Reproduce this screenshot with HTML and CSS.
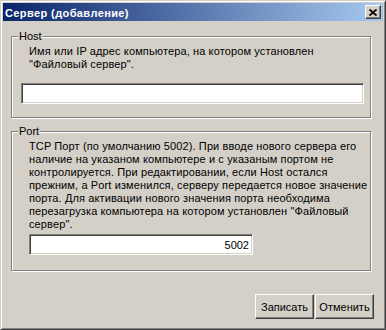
FILE: index.html
```html
<!DOCTYPE html>
<html lang="ru">
<head>
  <meta charset="UTF-8">
  <title>Сервер (добавление)</title>
  <link rel="stylesheet" href="styles.css">
</head>
<body>

<div class="window">
  <div class="caption">
    <span class="caption-text">Сервер (добавление)</span>
    <div class="close">
      <svg width="8" height="7" viewBox="0 0 8 7">
        <path d="M0.5 0.5 L7.5 6.5 M7.5 0.5 L0.5 6.5" stroke="#000" stroke-width="1.8" fill="none"/>
      </svg>
    </div>
  </div>

  <div class="client">
    <div class="group host">
      <span class="group-title">Host</span>
      <div class="hint">Имя или IP адрес компьютера, на котором установлен<br>"Файловый сервер".</div>
      <input class="edit host-edit" type="text">
    </div>

    <div class="group port">
      <span class="group-title">Port</span>
      <div class="hint">TCP Порт (по умолчанию 5002). При вводе нового сервера его<br>наличие на указаном компьютере и с указаным портом не<br>контролируется. При редактировании, если Host остался<br>прежним, а Port изменился, серверу передается новое значение<br>порта. Для активации нового значения порта необходима<br>перезагрузка компьютера на котором установлен "Файловый<br>сервер".</div>
      <input class="edit port-edit" type="text" value="5002">
    </div>

    <div class="buttons">
      <button class="btn">Записать</button>
      <button class="btn">Отменить</button>
    </div>
  </div>
</div>

</body>
</html>
```

FILE: styles.css
```css
* {
  box-sizing: border-box;
}
body {
  margin: 0;
  background: #d4d0c8;
  font-family: "Liberation Sans", Arial, sans-serif;
  font-size: 11px;
  color: #000;
}
.window {
  width: 386px;
  height: 330px;
  background: #d4d0c8;
  border: 1px solid;
  border-color: #d4d0c8 #404040 #404040 #d4d0c8;
  box-shadow: inset 1px 1px #fff, inset -1px -1px #808080;
  padding: 2px;
  display: flex;
  flex-direction: column;
}
.caption {
  height: 18px;
  display: flex;
  align-items: center;
  justify-content: space-between;
  padding: 0 2px 0 2px;
  background: linear-gradient(to right, #0a246a, #a6caf0);
}
.caption-text {
  color: #fff;
  font-weight: bold;
  font-size: 11px;
  letter-spacing: 0.4px;
  padding-top: 1px;
}
.close {
  width: 16px;
  height: 14px;
  background: #d4d0c8;
  border: 1px solid;
  border-color: #fff #404040 #404040 #fff;
  box-shadow: inset -1px -1px #808080;
  display: flex;
  align-items: center;
  justify-content: center;
}
.close svg {
  display: block;
}
.client {
  flex: 1;
  display: flex;
  flex-direction: column;
  padding-left: 8px;
}
.group {
  position: relative;
  width: 360px;
  border: 1px solid #808080;
  box-shadow: 1px 1px #fff, inset 1px 1px #fff;
  padding: 8px 0 0 0;
  display: flex;
  flex-direction: column;
  align-items: flex-start;
}
.group-title {
  position: absolute;
  top: -7px;
  left: 6px;
  padding: 0 1px;
  line-height: 13px;
  background: #d4d0c8;
}
.hint {
  line-height: 13px;
  padding-left: 17px;
  letter-spacing: 0.12px;
  white-space: nowrap;
}
.edit {
  height: 21px;
  margin: 0;
  padding: 0 3px;
  font-family: "Liberation Sans", Arial, sans-serif;
  font-size: 11px;
  color: #000;
  background: #fff;
  border: 1px solid;
  border-color: #808080 #fff #fff #808080;
  box-shadow: inset 1px 1px #404040, inset -1px -1px #d4d0c8;
  outline: none;
}
.host {
  margin-top: 15px;
  height: 82px;
}
.host-edit {
  margin: 12px 0 0 9px;
  width: 343px;
}
.port {
  margin-top: 13px;
  height: 140px;
}
.port-edit {
  margin: 3px 0 0 17px;
  width: 224px;
  text-align: right;
}
.buttons {
  display: flex;
  justify-content: flex-end;
  gap: 1px;
  margin-top: 23px;
  padding-right: 9px;
}
.btn {
  width: 59px;
  height: 25px;
  margin: 0;
  padding: 0;
  font-family: "Liberation Sans", Arial, sans-serif;
  font-size: 11px;
  color: #000;
  background: #d4d0c8;
  border: 1px solid;
  border-color: #fff #404040 #404040 #fff;
  box-shadow: inset -1px -1px #808080;
}
```
